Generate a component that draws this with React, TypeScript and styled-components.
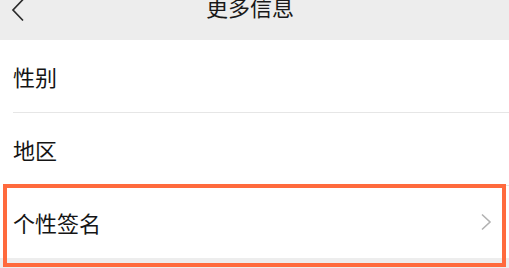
import React from "react";
import styled, { createGlobalStyle } from "styled-components";

const GlobalStyle = createGlobalStyle`
  html, body {
    margin: 0;
    padding: 0;
    background: #ededed;
    font-family: "Noto Sans CJK SC", "Noto Sans", sans-serif;
  }
  #root { width: 509px; height: 268px; overflow: hidden; }
`;

const Page = styled.div`
  width: 509px;
  height: 268px;
  background: #ededed;
  display: flex;
  flex-direction: column;
  overflow: hidden;
`;

const Header = styled.div`
  height: 40px;
  flex: 0 0 40px;
  background: #ededed;
  position: relative;
  display: flex;
  justify-content: center;
  align-items: flex-start;
  overflow: hidden;
`;

const Title = styled.div`
  font-size: 22px;
  line-height: 22px;
  color: #191919;
  margin-top: -5px;
  margin-right: 9px;
`;

const BackButton = styled.div`
  position: absolute;
  left: 10px;
  top: -2px;
  width: 16px;
  height: 24px;
  display: flex;
`;

const List = styled.div`
  background: #fff;
  display: flex;
  flex-direction: column;
`;

const Row = styled.div<{ $divider?: boolean }>`
  height: 72px;
  display: flex;
  align-items: center;
  justify-content: space-between;
  padding: 0 16px 0 13px;
  position: relative;
  box-sizing: border-box;
  ${(p) =>
    p.$divider
      ? `
  &::after {
    content: "";
    position: absolute;
    left: 13px;
    right: 0;
    bottom: -1px;
    height: 1px;
    background: #e6e6e6;
  }
  margin-bottom: 1px;
  `
      : ""}
`;

const Label = styled.span`
  font-size: 22px;
  line-height: 24px;
  color: #151515;
`;

const Highlight = styled.div`
  position: absolute;
  left: 3px;
  right: 3px;
  top: -2px;
  bottom: -9px;
  border: 4px solid #ff6a3d;
  pointer-events: none;
`;

const Chevron = styled.svg`
  width: 12px;
  height: 18px;
  margin-right: 1px;
`;

export default function App() {
  return (
    <>
      <GlobalStyle />
      <Page>
        <Header>
          <BackButton>
            <svg width="16" height="24" viewBox="0 0 16 24">
              <path d="M13 1.5 L3 12 L13 22.5" fill="none" stroke="#2b2b2b" strokeWidth="1.7" />
            </svg>
          </BackButton>
          <Title>更多信息</Title>
        </Header>
        <List>
          <Row $divider>
            <Label>性别</Label>
          </Row>
          <Row $divider>
            <Label>地区</Label>
          </Row>
          <Row>
            <Label>个性签名</Label>
            <Chevron viewBox="0 0 12 18">
              <path d="M2 1.5 L10 9 L2 16.5" fill="none" stroke="#b2b2b2" strokeWidth="1.6" />
            </Chevron>
            <Highlight />
          </Row>
        </List>
      </Page>
    </>
  );
}
